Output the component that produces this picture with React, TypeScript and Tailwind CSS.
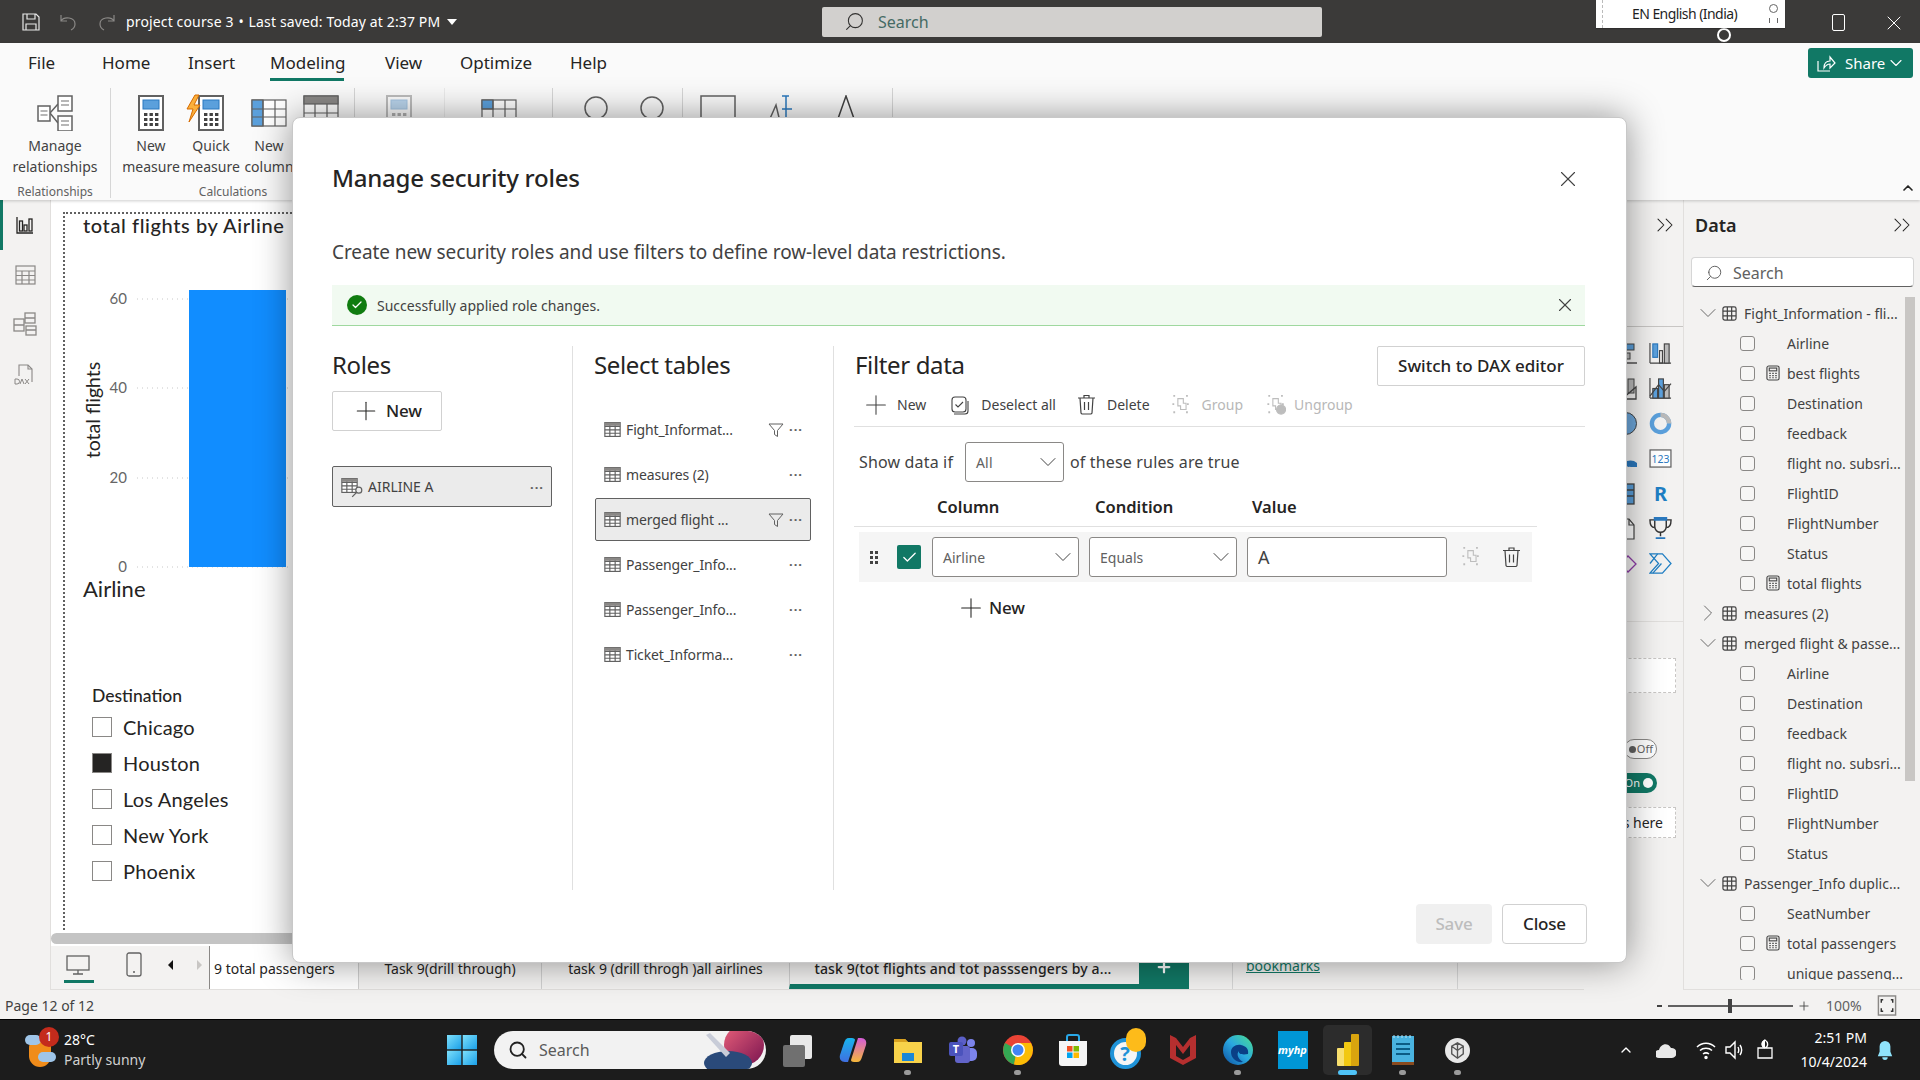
import React from "react";
import { ChevronDown, ChevronRight, ChevronUp, ChevronsRight, Plus, Search, X, Check } from "lucide-react";

const Tbl = ({ c = "#616161", className = "" }: { c?: string; className?: string }) => (
  <svg viewBox="0 0 16 16" className={className} fill="none" stroke={c} strokeWidth="1.1">
    <rect x="0.8" y="1.5" width="14.4" height="13" fill="#fff" />
    <path d="M0.8 5h14.4M0.8 8.3h14.4M0.8 11.5h14.4M5.5 1.5v13M10.5 1.5v13" />
    <rect x="0.8" y="1.5" width="14.4" height="3" fill="#8a8886" stroke="none" />
  </svg>
);
const TreeTbl = () => (
  <svg viewBox="0 0 16 16" className="w-[15px] h-[15px] shrink-0" fill="none" stroke="#444" strokeWidth="1.3">
    <rect x="1" y="1" width="14" height="14" rx="2" />
    <path d="M1 5.5h14M1 10.500h14M5.700 1v14M10.300 1v14" />
  </svg>
);
const Calc = () => (
  <svg viewBox="0 0 15 17" className="w-[14px] h-[16px] shrink-0" fill="none" stroke="#444" strokeWidth="1.2">
    <rect x="1" y="1" width="13" height="15" rx="2" />
    <rect x="3.5" y="3.2" width="8" height="3" />
    <path d="M3.5 9h1.600M6.700 9h1.600M9.900 9h1.600M3.500 11.300h1.600M6.700 11.300h1.600M9.900 11.300h1.600M3.500 13.600h1.600M6.700 13.600h1.600M9.900 13.600h1.600" strokeWidth="1.3" />
  </svg>
);
const Funnel = () => (
  <svg viewBox="0 0 16 16" className="w-[16px] h-[16px]" fill="none" stroke="#616161" strokeWidth="1">
    <path d="M1 2h14L9.500 8.500V14.500L6.500 12.500V8.500Z" />
  </svg>
);
const Trash = ({ c = "#424242", className = "w-[19px] h-[21px]" }: { c?: string; className?: string }) => (
  <svg viewBox="0 0 19 21" className={className} fill="none" stroke={c} strokeWidth="1.2">
    <path d="M1 4h17M7 4V1.500h5V4M3 4l1 15a1.500 1.500 0 0 0 1.500 1h8a1.500 1.500 0 0 0 1.500-1l1-15M7.500 8v8M11.500 8v8" />
  </svg>
);
const GroupIc = ({ x = false }: { x?: boolean }) => (
  <svg viewBox="0 0 20 22" className="w-[19px] h-[20px]" fill="none" stroke="#bdbdbd" strokeWidth="1.2">
    <path d="M1 1h2M1 9v2M1 19h2M15 1h2M17 9v2" strokeWidth="2" />
    <path d="M6 4h6v5h3v7H9v-4H6Z" />
    {x ? <circle cx="15" cy="16" r="5" fill="#bdbdbd" /> : <path d="M15 19h2" strokeWidth="2" />}
  </svg>
);
const Dots = () => <span className="text-[#616161] text-[13px] leading-none tracking-[1px] font-bold">···</span>;

const RibbonBtn = ({ w, l1, l2, children }: { w: string; l1: string; l2: string; children: React.ReactNode }) => (
  <div className={`${w} flex flex-col items-center shrink-0`}>
    <div className="h-[49px] flex items-start justify-center">{children}</div>
    <span className="text-[14px] leading-[20px] text-[#424242] whitespace-nowrap mt-[-1px]">{l1}</span>
    <span className="text-[14px] leading-[21px] text-[#424242] whitespace-nowrap">{l2}</span>
  </div>
);

const CalcBig = () => (
  <svg viewBox="0 0 26 36" className="w-[26px] h-[36px]">
    <rect x="1" y="1" width="24" height="34" fill="#fff" stroke="#616161" strokeWidth="2" />
    <rect x="5" y="5" width="16" height="9" fill="#5ba0dc" stroke="#2b79bf" />
    {[18, 23, 28].map((y) => [6, 11.5, 17].map((x) => <rect key={`${x}${y}`} x={x} y={y} width="3.4" height="3" fill="#424242" />))}
  </svg>
);

const fields1 = [
  ["Airline"], ["best flights", 1], ["Destination"], ["feedback"], ["flight no. subsri..."], ["FlightID"], ["FlightNumber"], ["Status"], ["total flights", 1],
] as [string, number?][];
const fields2 = [["Airline"], ["Destination"], ["feedback"], ["flight no. subsri..."], ["FlightID"], ["FlightNumber"], ["Status"]] as [string, number?][];
const fields3 = [["SeatNumber"], ["total passengers", 1], ["unique passeng..."]] as [string, number?][];

const GroupRow = ({ t, open = true }: { t: string; open?: boolean }) => (
  <div className="h-[30px] flex items-center pl-[10px] text-[14px] text-[#424242] whitespace-nowrap">
    {open ? <ChevronDown className="w-[28px] h-[28px] shrink-0 text-[#616161]" strokeWidth={0.8} /> : <ChevronRight className="w-[28px] h-[28px] shrink-0 text-[#616161]" strokeWidth={0.8} />}
    <TreeTbl />
    <span className="ml-[7px]">{t}</span>
  </div>
);
const FieldRow = ({ t, calc }: { t: string; calc?: number }) => (
  <div className="h-[30px] flex items-center pl-[56px] text-[14px] text-[#424242] whitespace-nowrap">
    <span className="w-[15px] h-[15px] shrink-0 border border-[#8a8886] rounded-[3px] bg-[#f7f6f5]" />
    <span className="w-[14px] ml-[11px] shrink-0">{calc ? <Calc /> : null}</span>
    <span className="ml-[7px]">{t}</span>
  </div>
);

const SelectBox = ({ t, w }: { t: string; w: string }) => (
  <div className={`${w} h-[40px] shrink-0 bg-white border border-[#8a8886] rounded-[3px] flex items-center justify-between pl-[10px] pr-[1px] text-[14px] text-[#616161]`}>
    <span>{t}</span>
    <ChevronDown className="w-[28px] h-[28px] text-[#424242]" strokeWidth={0.85} />
  </div>
);

const tables: [string, boolean, boolean][] = [
  ["Fight_Informat...", true, false],
  ["measures (2)", false, false],
  ["merged flight ...", true, true],
  ["Passenger_Info...", false, false],
  ["Passenger_Info...", false, false],
  ["Ticket_Informa...", false, false],
];

const AppIcon = ({ children, dot, active }: { children: React.ReactNode; dot?: boolean; active?: boolean }) => (
  <div className="w-[55px] h-[60px] shrink-0 flex items-center justify-center relative">
    {active && <span className="absolute left-[3px] top-[5px] w-[49px] h-[50px] bg-[#2c2c2c] rounded-[5px]" />}
    <span className="relative">{children}</span>
    {dot && <span className="absolute bottom-[5px] left-[24px] w-[7px] h-[5px] rounded-full bg-[#9a9a9a]" />}
    {active && <span className="absolute bottom-[5px] left-[18px] w-[19px] h-[5px] rounded-full bg-[#4fc3f7]" />}
  </div>
);

const VizCell = ({ children }: { children: React.ReactNode }) => <div className="h-[35px] flex items-center">{children}</div>;

export default function App() {
  return (
    <div className="relative w-[1920px] h-[1080px] overflow-hidden flex flex-col font-['Noto_Sans',sans-serif] text-[#252423] bg-white">
      {/* Title bar */}
      <div className="h-[43px] shrink-0 bg-[#3b3a39] flex items-center pl-[22px] text-white">
        <svg viewBox="0 0 18 18" className="w-[18px] h-[18px]" fill="none" stroke="#e8e8e8" strokeWidth="1.2">
          <path d="M1 1h13l3 3v13H1Z M5 1v5h8V1M4 17v-6h10v6" />
        </svg>
        <svg viewBox="0 0 18 18" className="w-[18px] h-[18px] ml-[20px]" fill="none" stroke="#8a8886" strokeWidth="1.2">
          <path d="M1 2v6h6M1 8c3-5 14-4 14 3 0 3-2 5-4 6" />
        </svg>
        <svg viewBox="0 0 18 18" className="w-[18px] h-[18px] ml-[19px]" fill="none" stroke="#8a8886" strokeWidth="1.2">
          <path d="M17 2v6h-6M17 8C14 3 3 4 3 11c0 3 2 5 4 6" />
        </svg>
        <span className="ml-[11px] w-[321px] text-[14px] whitespace-nowrap tracking-[0.01em]">project course 3 <span className="mx-[1px]">•</span> Last saved: Today at 2:37 PM</span>
        <span className="w-0 h-0 border-l-[5px] border-r-[5px] border-t-[6px] border-l-transparent border-r-transparent border-t-white" />
        <div className="ml-[365px] w-[500px] h-[30px] bg-[#d2d0ce] rounded-[2px] flex items-center pl-[22px]">
          <Search className="w-[21px] h-[21px] text-[#323130] -scale-x-100" strokeWidth={1.2} />
          <span className="ml-[13px] text-[16px] text-[#456a64]">Search</span>
        </div>
        <span className="ml-[395px] mt-[26px] w-[14px] h-[14px] rounded-full border-2 border-white" />
        <span className="ml-[101px] w-[13px] h-[17px] mt-[2px] border-[1.5px] border-white rounded-[2px]" />
        <X className="ml-[37px] w-[24px] h-[24px] mt-[2px]" strokeWidth={1} />
      </div>
      {/* Language overlay */}
      <div className="absolute left-[1596px] top-0 w-[189px] h-[28px] bg-white z-30 flex items-center text-[14px] text-[#1f1f1f] shadow-[0_1px_1px_rgba(0,0,0,0.2)] border-l-[3px] border-white">
        <span className="h-full border-l border-dashed border-[#bbb] ml-[3px]" />
        <span className="ml-[29px] mt-[-2px] tracking-[-0.04em] whitespace-nowrap">EN English (India)</span>
        <span className="ml-[32px] flex flex-col items-center mt-[-2px]">
          <span className="w-[9px] h-[9px] rounded-full border-[1.5px] border-[#666]" />
          <span className="w-[9px] h-[5px] mt-[5px] border-x-[1.5px] border-b-0 border-[#666]" />
        </span>
      </div>

      {/* Ribbon */}
      <div className="h-[157px] shrink-0 bg-[#fafafa] relative z-10 shadow-[0_1px_3px_rgba(0,0,0,0.2)] flex flex-col">
        <div className="h-[45px] flex items-start text-[17px] text-[#252423] pt-[7px] pl-[28px]">
          <span className="w-[74px]">File</span>
          <span className="w-[86px]">Home</span>
          <span className="w-[82px]">Insert</span>
          <span className="w-[115px] flex flex-col">
            <span>Modeling</span>
            <span className="w-[74px] h-[3px] mt-[2px] bg-[#117865]" />
          </span>
          <span className="w-[75px]">View</span>
          <span className="w-[110px]">Optimize</span>
          <span className="w-[50px]">Help</span>
          <span className="ml-auto mr-[7px] mt-[-2px] w-[105px] h-[30px] rounded-[3px] bg-[#117865] text-white text-[15px] flex items-center pl-[8px]">
            <svg viewBox="0 0 20 20" className="w-[20px] h-[20px]" fill="none" stroke="#fff" strokeWidth="1.2">
              <path d="M2 8v10h12M8 15c0-5 3-7 6-7V4l5 6-5 5v-4c-2 0-4 1-6 4Z" />
            </svg>
            <span className="ml-[9px]">Share</span>
            <ChevronDown className="w-[20px] h-[20px] ml-[1px]" strokeWidth={1.3} />
          </span>
        </div>
        <div className="flex h-[110px]">
          <div className="w-[111px] shrink-0 flex flex-col items-center border-r border-[#d6d6d6] h-[110px]">
            <RibbonBtn w="w-[110px]" l1="Manage" l2="relationships">
              <svg viewBox="0 0 36 36" className="w-[36px] h-[36px] mt-[7px]" fill="#fff" stroke="#616161" strokeWidth="1.5">
                <path d="M13 18L21 9M13 18L21 28" fill="none" />
                <rect x="1" y="11" width="12" height="15" />
                <rect x="21" y="1" width="14" height="15" />
                <rect x="21" y="21" width="14" height="15" />
                <path d="M3.500 16h7M3.500 20h7M24 6h8M24 10h8M24 26h8M24 30h8" fill="none" stroke="#a0a0a0" />
              </svg>
            </RibbonBtn>
            <span className="text-[12px] leading-[17px] text-[#616161] mt-[6px]">Relationships</span>
          </div>
          <div className="w-[244px] shrink-0 border-r border-[#d6d6d6] h-[110px] flex flex-col pl-[10px]">
            <div className="flex">
              <RibbonBtn w="w-[60px]" l1="New" l2="measure"><span className="mt-[7px]"><CalcBig /></span></RibbonBtn>
              <RibbonBtn w="w-[60px]" l1="Quick" l2="measure">
                <span className="mt-[7px] relative flex">
                  <CalcBig />
                  <svg viewBox="0 0 16 28" className="absolute left-[-12px] top-[-2px] w-[16px] h-[30px]" fill="#fbb03b" stroke="#d66b00">
                    <path d="M9 1L1 15h6l-4 13 11-17H8l5-10Z" />
                  </svg>
                </span>
              </RibbonBtn>
              <RibbonBtn w="w-[56px]" l1="New" l2="column">
                <svg viewBox="0 0 36 28" className="w-[36px] h-[28px] mt-[11px]" fill="#fff" stroke="#616161" strokeWidth="1.2">
                  <rect x="1" y="1" width="34" height="26" />
                  <rect x="1" y="1" width="11" height="26" fill="#5ba0dc" />
                  <path d="M1 10h34M1 18h34M12 1v26M24 1v26" fill="none" />
                </svg>
              </RibbonBtn>
              <span className="ml-[6px] mt-[7px]">
                <svg viewBox="0 0 36 36" className="w-[36px] h-[36px]" fill="#fff" stroke="#616161" strokeWidth="1.2">
                  <rect x="1" y="1" width="34" height="34" />
                  <rect x="1" y="1" width="34" height="8" fill="#8a8886" />
                  <path d="M1 18h34M1 27h34M12 9v26M24 9v26" fill="none" />
                </svg>
              </span>
            </div>
            <span className="text-[12px] leading-[17px] text-[#616161] text-center mt-[6px] w-[224px]">Calculations</span>
          </div>
          <div className="w-[90px] shrink-0 border-r border-[#d6d6d6] h-[110px] pl-[31px] pt-[7px] opacity-40">
            <CalcBig />
          </div>
          <div className="w-[108px] shrink-0 border-r border-[#d6d6d6] h-[110px] pl-[36px] pt-[11px]">
            <svg viewBox="0 0 36 30" className="w-[36px] h-[30px]" fill="#fff" stroke="#616161" strokeWidth="1.2">
              <rect x="1" y="1" width="34" height="28" /><rect x="1" y="1" width="11" height="9" fill="#5ba0dc" /><path d="M1 10h34M12 1v28M24 1v28" fill="none" />
            </svg>
          </div>
          <div className="w-[130px] shrink-0 border-r border-[#d6d6d6] h-[110px] pl-[30px] pt-[7px] flex gap-[30px]">
            {[0, 1].map((i) => (
              <svg key={i} viewBox="0 0 26 36" className="w-[26px] h-[36px]" fill="none" stroke="#616161" strokeWidth="1.5"><circle cx="13" cy="13" r="11" /><path d="M13 24l6 6" stroke="#2b79bf" /></svg>
            ))}
          </div>
          <div className="w-[210px] shrink-0 border-r border-[#d6d6d6] h-[110px] pl-[17px] pt-[7px] flex gap-[28px]">
            <svg viewBox="0 0 36 36" className="w-[36px] h-[36px]" fill="none" stroke="#616161" strokeWidth="1.5"><rect x="1" y="1" width="34" height="34" /></svg>
            <svg viewBox="0 0 30 36" className="w-[30px] h-[36px]" fill="none" stroke="#616161" strokeWidth="1.5"><path d="M1 35L12 10l6 25" /><path d="M18 1h7M22 1v34M18 14h10" stroke="#2b79bf" /></svg>
            <svg viewBox="0 0 26 36" className="w-[26px] h-[36px] ml-[11px]" fill="none" stroke="#424242" strokeWidth="1.5"><path d="M1 35L13 1l12 34" /></svg>
          </div>
        </div>
        <ChevronUp className="absolute right-[4px] bottom-[4px] w-[16px] h-[16px] text-[#252423]" strokeWidth={2.5} />
      </div>

      {/* Body */}
      <div className="flex-1 flex min-h-0">
        {/* Left rail */}
        <div className="w-[51px] shrink-0 bg-[#f3f2f1] border-r border-[#e1dfdd] flex flex-col">
          <div className="h-[50px] border-l-[3px] border-[#117865] flex items-center justify-center pr-[3px]">
            <svg viewBox="0 0 18 18" className="w-[18px] h-[18px]" fill="none" stroke="#252423" strokeWidth="1.3">
              <path d="M1 1v16h16" /><rect x="3.500" y="5" width="3" height="10" /><rect x="8" y="9" width="3" height="6" /><rect x="13" y="3" width="3" height="12" />
            </svg>
          </div>
          <div className="h-[49px] flex items-center justify-center">
            <svg viewBox="0 0 21 20" className="w-[21px] h-[20px]" fill="none" stroke="#8a8886" strokeWidth="1.2"><rect x="1" y="1" width="19" height="18" /><path d="M1 6h19M1 10.500h19M1 15h19M7 6v13M14 6v13" /></svg>
          </div>
          <div className="h-[50px] flex items-center justify-center">
            <svg viewBox="0 0 24 24" className="w-[24px] h-[24px]" fill="none" stroke="#8a8886" strokeWidth="1.3"><rect x="1" y="7" width="10" height="12" /><rect x="12" y="1" width="10" height="10" /><rect x="13" y="14" width="10" height="9" /><path d="M1 13h10M12 6h10M13 18h10" /></svg>
          </div>
          <div className="h-[52px] flex items-center justify-center">
            <svg viewBox="0 0 24 22" className="w-[24px] h-[22px]" fill="none" stroke="#8a8886" strokeWidth="1.1">
              <path d="M6 12V1h9l4 4v13" /><path d="M15 1v4h4" />
              <path d="M2 15h2a2 2 0 0 1 0 5H2ZM7 20l2-5 2 5M12 15l4 5M16 15l-4 5" strokeWidth="1" />
            </svg>
          </div>
        </div>

        {/* Canvas column */}
        <div className="w-[1533px] shrink-0 flex flex-col">
          <div className="h-[733px] shrink-0 bg-white pl-[12px] pt-[12px]">
            <div className="h-[718px] border-l-2 border-t-2 border-dotted border-[#616161] pl-[18px]">
              <div className="text-[20px] leading-[22px] text-[#252423] whitespace-nowrap tracking-[0.03em] font-['Lato',sans-serif] font-medium">total flights by Airline</div>
              <svg width="227" height="338" className="ml-[-18px] mt-[2px] block">
                <g fill="#666" fontSize="15" textAnchor="end" fontFamily="Lato, sans-serif">
                  <text x="62" y="66">60</text>
                  <text x="62" y="155">40</text>
                  <text x="62" y="245">20</text>
                  <text x="62" y="334">0</text>
                </g>
                <g stroke="#c8c8c8" strokeDasharray="1 4">
                  <path d="M72 61H227M72 150H227M72 240H227M72 329H227" />
                </g>
                <rect x="124" y="52" width="97" height="277" fill="#118dff" />
                <text transform="rotate(-90)" x="-172" y="35" textAnchor="middle" fontSize="19.5" fill="#252423" fontFamily="Lato, sans-serif">total flights</text>
              </svg>
              <div className="text-[22px] leading-[26px] font-['Lato',sans-serif] text-[#252423]">Airline</div>
              <div className="mt-[82px] ml-[9px] text-[17.5px] leading-[23px] font-medium font-['Lato',sans-serif]">Destination</div>
              <div className="ml-[9px] mt-[2px] flex flex-col font-['Lato',sans-serif] text-[20px] tracking-[0.01em]">
                {["Chicago", "Houston", "Los Angeles", "New York", "Phoenix"].map((c) => (
                  <div key={c} className="h-[36px] flex items-center whitespace-nowrap">
                    <span className={`w-[20px] h-[20px] border border-[#8a8886] ${c === "Houston" ? "bg-[#252423]" : "bg-white"}`} />
                    <span className="ml-[11px]">{c}</span>
                  </div>
                ))}
              </div>
            </div>
          </div>
          <div className="h-[11px] bg-[#c4c4c4] rounded-l-full" />
          <div className="h-[2px] bg-white" />
          <div className="flex-1 flex bg-[#f3f2f1] border-b border-[#e1dfdd] text-[14px]">
            <div className="w-[159px] shrink-0 flex relative border-r border-[#8a8886]">
              <svg viewBox="0 0 24 20" className="absolute left-[15px] top-[9px] w-[24px] h-[20px]" fill="none" stroke="#616161" strokeWidth="1.3"><rect x="1" y="1" width="22" height="14" /><path d="M12 15v4M7 19h10" /></svg>
              <span className="absolute left-[13px] bottom-[6px] w-[30px] h-[3px] bg-[#117865]" />
              <svg viewBox="0 0 16 25" className="absolute left-[75px] top-[6px] w-[16px] h-[25px]" fill="none" stroke="#616161" strokeWidth="1.3"><rect x="1" y="1" width="14" height="23" rx="2" /><path d="M7 20h2" /></svg>
              <span className="absolute left-[117px] top-[14px] w-0 h-0 border-y-[5px] border-r-[5px] border-y-transparent border-r-[#111]" />
              <span className="absolute left-[146px] top-[14px] w-0 h-0 border-y-[5px] border-l-[5px] border-y-transparent border-l-[#c8c6c4]" />
            </div>
            <div className="w-[149px] shrink-0 bg-white pl-[4px] pt-[12px] whitespace-nowrap border-r border-[#d0d0d0]">9 total passengers</div>
            <div className="w-[183px] shrink-0 pt-[12px] text-center whitespace-nowrap border-r border-[#d0d0d0]">Task 9(drill through)</div>
            <div className="w-[247px] shrink-0 pt-[12px] text-center whitespace-nowrap">task 9 (drill throgh )all airlines</div>
            <div className="w-[350px] shrink-0 border-l border-[#d0d0d0] border-b-[5px] border-b-[#117865] pt-[12px] pr-[3px] text-center whitespace-nowrap font-medium tracking-[0.01em]">task 9(tot flights and tot passsengers by a...</div>
            <div className="w-[50px] shrink-0 bg-[#117865] text-white flex justify-center pt-[12px]"><Plus className="w-[18px] h-[18px]" strokeWidth={3} /></div>
            <div className="w-[43px] shrink-0" />
            <div className="w-[226px] shrink-0 border-x border-[#d6d6d6] pl-[13px] pt-[9px]"><span className="underline text-[#117865]">bookmarks</span></div>
          </div>
        </div>

        {/* Visual pane strip */}
        <div className="w-[100px] shrink-0 bg-[#f3f2f1] border-r border-[#e1dfdd] flex flex-col overflow-hidden">
          <div className="h-[50px] flex items-center justify-end pr-[4px]"><ChevronsRight className="w-[28px] h-[28px]" strokeWidth={0.9} /></div>
          <div className="h-[77px] border-b border-[#c8c6c4]" />
          <div className="pl-[30px] pt-[9px] grid grid-cols-[23px_23px] gap-x-[12px]">
            <VizCell><svg viewBox="0 0 23 23" className="w-[23px] h-[23px]" fill="#5ba0dc" stroke="#444"><rect x="2" y="2" width="18" height="6" /><rect x="2" y="11" width="14" height="6" fill="#bbb" /><path d="M1 21h22" fill="none" strokeWidth="1.4" /></svg></VizCell>
            <VizCell><svg viewBox="0 0 24 24" className="w-[23px] h-[23px]" fill="none" stroke="#444" strokeWidth="1.2"><path d="M1 22h22M1 1v21" /><rect x="4" y="2" width="5" height="14" fill="#5ba0dc" stroke="#2b79bf" /><rect x="11" y="9" width="3" height="13" /><rect x="16" y="2" width="5" height="20" fill="#bbb" /></svg></VizCell>
            <VizCell><svg viewBox="0 0 23 23" className="w-[23px] h-[23px]" fill="#bbb" stroke="#444"><rect x="14" y="2" width="6" height="14" /><path d="M8 22l14-12V22Z" fill="none" strokeWidth="1.3" /></svg></VizCell>
            <VizCell><svg viewBox="0 0 24 24" className="w-[23px] h-[23px]" fill="none" stroke="#444" strokeWidth="1.2"><path d="M1 22h22M1 1v21" /><rect x="4" y="12" width="5" height="10" fill="#5ba0dc" /><rect x="10" y="2" width="5" height="20" fill="#5ba0dc" /><rect x="16" y="8" width="5" height="14" fill="#bbb" /><path d="M1 20L10 8l6 7 7-8" /></svg></VizCell>
            <VizCell><svg viewBox="0 0 23 23" className="w-[23px] h-[23px]"><circle cx="11.500" cy="11.500" r="11" fill="#6ea8dc" stroke="#444" /></svg></VizCell>
            <VizCell><svg viewBox="0 0 24 24" className="w-[23px] h-[23px]" fill="none" strokeWidth="4.500"><circle cx="12" cy="12" r="9" stroke="#5ba0dc" /><path d="M12 3a9 9 0 0 1 9 9" stroke="#b9b9b9" /></svg></VizCell>
            <VizCell><svg viewBox="0 0 23 23" className="w-[23px] h-[23px]" fill="#2b79bf"><path d="M10 16a10 10 0 0 1 13 0v4h-6a4 4 0 0 0-3 0Z" /></svg></VizCell>
            <VizCell><svg viewBox="0 0 24 20" className="w-[23px] h-[19px]" fill="#fff" stroke="#616161" strokeWidth="1.3"><rect x="1" y="1" width="22" height="18" /><text x="12" y="15" fontSize="11" fontFamily="Noto Sans" textAnchor="middle" fill="#2b79bf" stroke="none">123</text></svg></VizCell>
            <VizCell><svg viewBox="0 0 23 23" className="w-[23px] h-[23px]" fill="#5ba0dc" stroke="#444" strokeWidth="1.3"><rect x="6" y="2" width="14" height="20" /><path d="M6 8h14M6 14h14" /></svg></VizCell>
            <VizCell><span className="text-[#1f7fc4] text-[20px] font-bold leading-[22px] pl-[5px]">R</span></VizCell>
            <VizCell><svg viewBox="0 0 23 23" className="w-[23px] h-[23px]" fill="#fff" stroke="#444" strokeWidth="1.2"><path d="M6 22V2h9l5 6v14Z" /><path d="M15 2v6h5" fill="none" /></svg></VizCell>
            <VizCell><svg viewBox="0 0 24 24" className="w-[23px] h-[23px]" fill="none" stroke="#333" strokeWidth="1.5"><path d="M6 1h12v9a6 6 0 0 1-12 0Z" /><path d="M6 3H1c0 5 2 8 5 8M18 3h5c0 5-2 8-5 8M12 16v4" /><path d="M6 1h12v2H6ZM7 22h10" stroke="#2b79bf" strokeWidth="2" /></svg></VizCell>
            <VizCell><svg viewBox="0 0 23 23" className="w-[23px] h-[23px]" fill="none" stroke="#8e3ba8" strokeWidth="1.3"><path d="M14 4l8 8-8 8-8-8Z" /></svg></VizCell>
            <VizCell><svg viewBox="0 0 24 22" className="w-[23px] h-[21px]" fill="none" stroke="#1f7fc4" strokeWidth="1.3"><path d="M1 1h13l9 10-9 10H1l9-10Z" /><path d="M1 11l8-10M4 21l9-10" /></svg></VizCell>
          </div>
          <div className="mt-[40px] h-[1px] bg-[#e1dfdd] shrink-0" />
          <div className="mt-[36px] mr-[7px] h-[35px] bg-white border border-dashed border-[#c8c6c4] ml-[10px] shrink-0" />
          <div className="mt-[46px] ml-[40px] w-[33px] h-[20px] rounded-full border border-[#8a8886] bg-white text-[11px] text-[#616161] flex items-center justify-end pr-[3px] gap-[1px] shrink-0">
            <span className="w-[7px] h-[7px] rounded-full bg-[#616161]" />Off
          </div>
          <div className="mt-[14px] ml-[30px] w-[43px] h-[20px] rounded-full bg-[#117865] text-white text-[11px] flex items-center justify-end pr-[4px] gap-[3px] shrink-0">
            <span>On</span><span className="w-[10px] h-[10px] rounded-full bg-white" />
          </div>
          <div className="mt-[14px] mr-[7px] h-[31px] bg-white border border-dashed border-[#c8c6c4] ml-[10px] text-[14px] flex items-center justify-end pr-[12px] whitespace-nowrap shrink-0">fields here</div>
        </div>

        {/* Data pane */}
        <div className="w-[236px] shrink-0 bg-[#f3f2f1] flex flex-col border-b border-[#e1dfdd] relative">
          <div className="h-[50px] flex items-center justify-between pl-[11px] pr-[4px]">
            <span className="text-[18px] font-semibold">Data</span>
            <ChevronsRight className="w-[28px] h-[28px]" strokeWidth={0.9} />
          </div>
          <div className="ml-[7px] mt-[7px] w-[223px] h-[30px] bg-white rounded-[4px] border border-[#d6d6d6] border-b-[#616161] flex items-center pl-[13px] pt-[1px] shrink-0">
            <Search className="w-[18px] h-[18px] text-[#616161] -scale-x-100" strokeWidth={1.3} />
            <span className="ml-[10px] text-[16px] text-[#616161]">Search</span>
          </div>
          <div className="mt-[11px] h-[682px] overflow-hidden">
            <GroupRow t="Fight_Information - fli..." />
            {fields1.map(([t, c]) => <FieldRow key={t} t={t} calc={c} />)}
            <GroupRow t="measures (2)" open={false} />
            <GroupRow t="merged flight & passe..." />
            {fields2.map(([t, c]) => <FieldRow key={t} t={t} calc={c} />)}
            <GroupRow t="Passenger_Info duplic..." />
            {fields3.map(([t, c]) => <FieldRow key={t} t={t} calc={c} />)}
          </div>
          <span className="absolute right-[5px] top-[97px] w-[10px] h-[484px] bg-[#c8c6c4]" />
        </div>
      </div>

      {/* Status bar */}
      <div className="h-[29px] shrink-0 bg-[#f3f2f1] flex items-center pl-[5px] pt-[2px] text-[14px] text-[#424242]">
        <span>Page 12 of 12</span>
        <span className="ml-[1563px] w-[5px] h-[2px] bg-[#424242]" />
        <span className="ml-[6px] w-[125px] h-[2px] bg-[#616161] relative">
          <span className="absolute left-[60px] top-[-6px] w-[4px] h-[14px] bg-[#424242]" />
        </span>
        <Plus className="ml-[4px] w-[14px] h-[14px]" strokeWidth={1.5} />
        <span className="ml-[15px] text-[#616161]">100%</span>
        <svg viewBox="0 0 20 22" className="ml-[15px] w-[20px] h-[21px]" fill="none" stroke="#616161" strokeWidth="1.5"><rect x="1" y="1" width="18" height="20" stroke="#8a8886" /><path d="M6 5H4v3M14 5h2v3M6 17H4v-3M14 17h2v-3" stroke="#333" /></svg>
      </div>

      {/* Taskbar */}
      <div className="h-[61px] shrink-0 bg-[#1c1c1c] border-t border-black flex items-center text-white relative">
        <div className="w-[64px] h-full relative shrink-0">
          <span className="absolute left-[29px] top-[17px] w-[22px] h-[30px] rounded-full bg-[#f08c1a]" />
          <span className="absolute left-[25px] top-[15px] w-[16px] h-[10px] rounded-full bg-[#9fc5e8]" />
          <span className="absolute left-[38px] top-[32px] w-[18px] h-[10px] rounded-full bg-[#9fc5e8]" />
          <span className="absolute left-[39px] top-[7px] w-[20px] h-[20px] rounded-full bg-[#c42b1c] text-[12px] leading-[20px] text-center">1</span>
        </div>
        <div className="w-[383px] shrink-0 flex flex-col text-[14px] leading-[20px]">
          <span>28°C</span>
          <span className="text-[#d0d0d0]">Partly sunny</span>
        </div>
        <svg viewBox="0 0 30 30" className="w-[30px] h-[30px] shrink-0">
          <defs><linearGradient id="w" x1="0" y1="0" x2="1" y2="1"><stop offset="0" stopColor="#7ee0fb" /><stop offset="1" stopColor="#1a9fe8" /></linearGradient></defs>
          <rect x="0" y="0" width="14.300" height="14.300" fill="url(#w)" /><rect x="15.700" y="0" width="14.300" height="14.300" fill="url(#w)" /><rect x="0" y="15.700" width="14.300" height="14.300" fill="url(#w)" /><rect x="15.700" y="15.700" width="14.300" height="14.300" fill="url(#w)" />
        </svg>
        <div className="ml-[17px] w-[272px] h-[38px] rounded-full bg-[#f2f2f2] flex items-center pl-[14px] shrink-0 overflow-hidden relative">
          <Search className="w-[20px] h-[20px] text-[#222]" strokeWidth={2.2} />
          <span className="ml-[11px] text-[16px] text-[#5a5a5a]">Search</span>
          <svg viewBox="0 0 64 38" className="absolute right-0 top-0 w-[64px] h-[38px]">
            <defs><linearGradient id="m" x1="0" y1="0" x2="1" y2="1"><stop offset="0" stopColor="#e8607a" /><stop offset="1" stopColor="#7a1450" /></linearGradient></defs>
            <circle cx="42" cy="14" r="20" fill="url(#m)" />
            <ellipse cx="26" cy="32" rx="24" ry="12" fill="#2a4a7a" />
            <path d="M4 4L24 26l4-4L8 2Z" fill="#c8ccd8" />
          </svg>
        </div>
        <div className="ml-[4px] flex items-center shrink-0">
          <AppIcon>
            <span className="block relative w-[30px] h-[30px]">
              <span className="absolute left-[7px] top-0 w-[22px] h-[24px] rounded-[2px] bg-[#e8e8e8]" />
              <span className="absolute left-0 top-[10px] w-[22px] h-[22px] rounded-[2px] bg-[#707070]" />
            </span>
          </AppIcon>
          <AppIcon>
            <svg viewBox="0 0 30 30" className="w-[30px] h-[30px]" fill="none">
              <defs>
                <linearGradient id="cp" x1="0" y1="0" x2="0" y2="1"><stop offset="0" stopColor="#18b4ee" /><stop offset="1" stopColor="#3f6fe0" /></linearGradient>
                <linearGradient id="cq" x1="0" y1="0" x2="0" y2="1"><stop offset="0" stopColor="#d45bd8" /><stop offset="1" stopColor="#f5b73a" /></linearGradient>
              </defs>
              <path d="M11 3c-3 0-4 2-5 5L2 20c-1 4 1 7 5 7h3L17 5c0-1-1-2-3-2Z" fill="url(#cp)" />
              <path d="M19 27c3 0 4-2 5-5l4-12c1-4-1-7-5-7h-3L13 25c0 1 1 2 3 2Z" fill="url(#cq)" />
            </svg>
          </AppIcon>
          <AppIcon dot>
            <svg viewBox="0 0 30 28" className="w-[30px] h-[28px]"><path d="M1 3h11l3 3h14v21H1Z" fill="#f8d24a" /><path d="M1 3h11l3 3H1Z" fill="#d9a11f" /><rect x="9" y="17" width="12" height="8" fill="#1a87d8" /></svg>
          </AppIcon>
          <AppIcon>
            <svg viewBox="0 0 30 28" className="w-[30px] h-[28px]"><circle cx="23" cy="7" r="4" fill="#7b83eb" /><circle cx="14" cy="5" r="4.500" fill="#5b5fc7" /><rect x="17" y="12" width="12" height="13" rx="5" fill="#7b83eb" /><rect x="7" y="10" width="15" height="17" rx="3" fill="#6264c9" /><rect x="1" y="6" width="14" height="14" rx="2" fill="#4b53bc" /><text x="8" y="17" fontSize="11" fill="#fff" textAnchor="middle" fontFamily="Noto Sans" fontWeight="700">T</text></svg>
          </AppIcon>
          <AppIcon dot>
            <svg viewBox="0 0 30 30" className="w-[30px] h-[30px]"><circle cx="15" cy="15" r="15" fill="#ea4335" /><path d="M15 15L2 8A15 15 0 0 0 11 29.500Z" fill="#34a853" /><path d="M15 8h13a15 15 0 0 1-17 21.500Z" fill="#fbbc05" /><circle cx="15" cy="15" r="7" fill="#fff" /><circle cx="15" cy="15" r="5.500" fill="#4285f4" /></svg>
          </AppIcon>
          <AppIcon>
            <svg viewBox="0 0 30 32" className="w-[30px] h-[32px]"><path d="M9 7V3a2 2 0 0 1 2-2h8a2 2 0 0 1 2 2v4" fill="none" stroke="#29a8e8" strokeWidth="2" /><path d="M1 7h28v22a3 3 0 0 1-3 3H4a3 3 0 0 1-3-3Z" fill="#f5f5f5" /><rect x="9" y="12" width="5.500" height="5.500" fill="#f25022" /><rect x="15.500" y="12" width="5.500" height="5.500" fill="#7fba00" /><rect x="9" y="18.500" width="5.500" height="5.500" fill="#00a4ef" /><rect x="15.500" y="18.500" width="5.500" height="5.500" fill="#ffb900" /></svg>
          </AppIcon>
          <AppIcon>
            <span className="block relative w-[36px] h-[44px]">
              <span className="absolute left-0 top-[10px] w-[31px] h-[31px] rounded-full bg-[#f5f5f5] border-[4px] border-[#1f93d8] text-[#1f93d8] text-[20px] font-bold leading-[23px] text-center">?</span>
              <span className="absolute left-[16px] top-0 w-[20px] h-[24px] rounded-full bg-[#fdbb1a]" />
            </span>
          </AppIcon>
          <AppIcon>
            <svg viewBox="0 0 28 32" className="w-[28px] h-[32px]"><path d="M1 1l6 3 7 9 7-9 6-3v23l-13 7-13-7Z" fill="#b52f2f" /><path d="M7 11l7 9 7-9v11l-7 4-7-4Z" fill="#1c1c1c" /></svg>
          </AppIcon>
          <AppIcon dot>
            <svg viewBox="0 0 30 30" className="w-[30px] h-[30px]"><defs><linearGradient id="e" x1="1" y1="0" x2="0" y2="1"><stop offset="0" stopColor="#4be08f" /><stop offset=".5" stopColor="#2aa8e0" /><stop offset="1" stopColor="#0c4fa0" /></linearGradient></defs><circle cx="15" cy="15" r="15" fill="url(#e)" /><path d="M8 17c0-5 5-8 10-7 5 1 8 4 7 9-6 1-10 0-9-3-3 3-1 8 4 11-7 1-12-4-12-10Z" fill="#0a3f86" /></svg>
          </AppIcon>
          <AppIcon>
            <span className="block w-[30px] h-[38px] bg-[#0096d6] text-white text-[11px] italic font-bold leading-[38px] text-center">myhp</span>
          </AppIcon>
          <AppIcon active>
            <svg viewBox="0 0 24 32" className="w-[24px] h-[32px]"><rect x="1" y="14" width="8" height="18" rx="1" fill="#f8df6e" /><rect x="8" y="8" width="8" height="24" rx="1" fill="#f2c811" /><rect x="15" y="0" width="8" height="32" rx="1" fill="#d9a40e" /></svg>
          </AppIcon>
          <AppIcon dot>
            <svg viewBox="0 0 24 32" className="w-[24px] h-[32px]"><rect x="1" y="2" width="22" height="28" fill="#49b3e0" /><rect x="1" y="28" width="22" height="3" fill="#8a4b1f" /><path d="M5 10h14M5 15h14M5 20h14" stroke="#0b5c85" strokeWidth="2.200" /><path d="M3 1v3M7 1v3M11 1v3M15 1v3M19 1v3" stroke="#b8e3f5" /></svg>
          </AppIcon>
          <AppIcon dot>
            <svg viewBox="0 0 26 26" className="w-[25px] h-[25px]" fill="none"><circle cx="13" cy="13" r="13" fill="#e8e8e8" /><path d="M13 5l6 3.500v8L13 21l-6-4.500v-8Z M13 5v8M7 8.500l6 4.500 6-4.500M13 13v8" stroke="#555" strokeWidth="1.400" /></svg>
          </AppIcon>
        </div>
        <div className="ml-[133px] flex items-center shrink-0">
          <ChevronUp className="w-[16px] h-[16px]" strokeWidth={2} />
          <svg viewBox="0 0 20 18" className="ml-[22px] w-[20px] h-[18px]"><path d="M3 17a4 4 0 0 1 0-8c1-5 8-9 12-2a5 5 0 0 1 1 10Z" fill="#e8e8e8" /></svg>
          <svg viewBox="0 0 20 20" className="ml-[20px] w-[20px] h-[20px]" fill="none" stroke="#fff" strokeWidth="1.5"><path d="M1 7c5-5 13-5 18 0M4 10.500c3-3 9-3 12 0M7 14c2-1.500 4-1.500 6 0" /><circle cx="10" cy="17.500" r="1" fill="#fff" /></svg>
          <svg viewBox="0 0 20 20" className="ml-[8px] w-[20px] h-[20px]" fill="none" stroke="#fff" strokeWidth="1.4"><path d="M2 7h4l5-5v16l-5-5H2ZM14 7c1 2 1 4 0 6M16 5c2 3 2 7 0 10" /></svg>
          <svg viewBox="0 0 20 22" className="ml-[11px] w-[20px] h-[22px]" fill="none" stroke="#fff" strokeWidth="1.3"><path d="M3 9h14v10H3ZM10 9c-4-2-3-6 0-8 3 2 4 6 0 8Z" /><path d="M10 1c-4 2-4 6 0 8" fill="#fff" /></svg>
        </div>
        <div className="ml-[22px] w-[70px] flex flex-col items-end text-[14px] leading-[24px] shrink-0 whitespace-nowrap">
          <span>2:51 PM</span>
          <span>10/4/2024</span>
        </div>
        <svg viewBox="0 0 20 22" className="ml-[9px] w-[18px] h-[22px] shrink-0" fill="#8fe3fb"><path d="M10 1a6 6 0 0 0-6 6v6l-2 5h16l-2-5V7a6 6 0 0 0-6-6ZM7 19a3 3 0 0 0 6 0Z" /></svg>
      </div>

      {/* Modal */}
      <div className="absolute z-20 left-[292px] top-[117px] w-[1335px] h-[846px] bg-white rounded-[8px] border border-[#c8c8c8] shadow-[0_0_36px_rgba(0,0,0,0.42)] flex flex-col pl-[39px] pr-[41px] text-[#252423]">
        <div className="mt-[42px] h-[36px] flex items-center justify-between shrink-0">
          <span className="text-[24px] font-medium tracking-[-0.01em]">Manage security roles</span>
          <X className="w-[26px] h-[26px] mr-[4px] mt-[2px] text-[#424242]" strokeWidth={1} />
        </div>
        <div className="mt-[44px] h-[24px] flex items-center text-[19px] tracking-[-0.004em] text-[#424242] shrink-0">Create new security roles and use filters to define row-level data restrictions.</div>
        <div className="mt-[21px] h-[41px] bg-[#f1faf1] border-b border-[#9fd89f] flex items-center pl-[15px] pr-[9px] shrink-0 text-[14px] text-[#424242]">
          <span className="w-[20px] h-[20px] rounded-full bg-[#107c10] flex items-center justify-center"><Check className="w-[12px] h-[12px] text-white" strokeWidth={2.5} /></span>
          <span className="ml-[10px]">Successfully applied role changes.</span>
          <X className="ml-auto w-[22px] h-[22px] text-[#424242]" strokeWidth={1.2} />
        </div>
        <div className="mt-[20px] h-[544px] flex shrink-0">
          {/* Roles */}
          <div className="w-[241px] shrink-0 border-r border-[#e0e0e0]">
            <div className="h-[38px] flex items-center text-[24px] tracking-[-0.015em]">Roles</div>
            <div className="mt-[7px] w-[110px] h-[40px] border border-[#d1d1d1] rounded-[2px] flex items-center pl-[18px] text-[17px] font-medium tracking-[-0.01em]">
              <Plus className="w-[30px] h-[30px]" strokeWidth={0.85} />
              <span className="ml-[5px]">New</span>
            </div>
            <div className="mt-[35px] w-[220px] h-[41px] bg-[#ebebeb] border border-[#616161] rounded-[2px] flex items-center pl-[8px] pr-[7px] text-[14px] text-[#424242]">
              <span className="relative w-[20px] h-[20px]">
                <Tbl className="w-[17px] h-[17px]" />
                <svg viewBox="0 0 10 10" className="absolute right-[-2px] bottom-[-1px] w-[12px] h-[12px]" fill="#ebebeb" stroke="#616161"><circle cx="6.500" cy="3.500" r="2.500" /><path d="M5 5L1 9" /></svg>
              </span>
              <span className="ml-[7px] mt-[-1px]">AIRLINE A</span>
              <span className="ml-auto"><Dots /></span>
            </div>
          </div>
          {/* Tables */}
          <div className="w-[261px] shrink-0 border-r border-[#e0e0e0] pl-[21px]">
            <div className="h-[38px] flex items-center text-[24px] tracking-[-0.015em]">Select tables</div>
            <div className="mt-[23px] flex flex-col">
              {tables.map(([t, f, sel], i) => (
                <div key={i} className="h-[45px] flex items-center">
                  <div className={`w-[216px] ml-[1px] h-[43px] flex items-center pl-[8px] pr-[7px] text-[14px] tracking-[-0.01em] text-[#424242] rounded-[2px] border ${sel ? "bg-[#ebebeb] border-[#616161]" : "border-transparent"}`}>
                    <Tbl className="w-[17px] h-[17px] shrink-0" />
                    <span className="ml-[5px] whitespace-nowrap">{t}</span>
                    <span className="ml-auto flex items-center gap-[5px]">
                      {f && <Funnel />}
                      <Dots />
                    </span>
                  </div>
                </div>
              ))}
            </div>
          </div>
          {/* Filter */}
          <div className="flex-1 pl-[20px]">
            <div className="h-[40px] flex items-center justify-between pl-[1px]">
              <span className="text-[24px] tracking-[-0.015em] mt-[-2px]">Filter data</span>
              <span className="w-[208px] h-[40px] border border-[#d1d1d1] rounded-[2px] flex items-center justify-center text-[17px] font-medium">Switch to DAX editor</span>
            </div>
            <div className="h-[41px] pb-[3px] border-b border-[#e0e0e0] flex items-center text-[14px] text-[#424242]">
              <Plus className="ml-[6px] w-[32px] h-[32px]" strokeWidth={0.8} />
              <span className="ml-[5px]">New</span>
              <svg viewBox="0 0 18 20" className="ml-[25px] w-[18px] h-[20px]" fill="none" stroke="#424242" strokeWidth="1.1"><rect x="1" y="2" width="14" height="15" rx="3" /><path d="M3 19h11a3 3 0 0 0 3-3V6M4.500 9.500l2.500 2.500 5-5" /></svg>
              <span className="ml-[12px]">Deselect all</span>
              <Trash c="#424242" className="ml-[21px] w-[19px] h-[21px]" />
              <span className="ml-[11px]">Delete</span>
              <span className="ml-[22px]"><GroupIc /></span>
              <span className="ml-[11px] text-[#b8b8b8]">Group</span>
              <span className="ml-[24px]"><GroupIc x /></span>
              <span className="ml-[8px] text-[#b8b8b8]">Ungroup</span>
            </div>
            <div className="mt-[15px] h-[40px] flex items-center text-[16px] tracking-[0.01em] text-[#424242] pl-[5px]">
              <span className="w-[106px] whitespace-nowrap">Show data if</span>
              <SelectBox t="All" w="w-[99px]" />
              <span className="ml-[6px] whitespace-nowrap">of these rules are true</span>
            </div>
            <div className="mt-[7px] w-[683px] h-[38px] border-b border-[#e0e0e0] flex items-center text-[16.5px] font-semibold">
              <span className="ml-[83px] w-[158px]">Column</span>
              <span className="w-[157px]">Condition</span>
              <span>Value</span>
            </div>
            <div className="mt-[5px] ml-[5px] w-[673px] h-[50px] bg-[#f5f5f5] flex items-center">
              <span className="ml-[11px] w-[8px] grid grid-cols-2 gap-x-[2px] gap-y-[2px]">
                {[0, 1, 2, 3, 4, 5].map((i) => <span key={i} className="w-[3px] h-[3px] bg-[#424242]" />)}
              </span>
              <span className="ml-[19px] w-[24px] h-[24px] bg-[#117865] rounded-[2px] flex items-center justify-center shrink-0"><Check className="w-[17px] h-[17px] text-white" strokeWidth={1.8} /></span>
              <span className="ml-[11px]"><SelectBox t="Airline" w="w-[147px]" /></span>
              <span className="ml-[10px]"><SelectBox t="Equals" w="w-[148px]" /></span>
              <div className="ml-[10px] w-[200px] h-[40px] bg-white border border-[#8a8886] rounded-[3px] flex items-center pl-[10px] text-[18px] text-[#424242]">A</div>
              <span className="ml-[15px]"><GroupIc /></span>
              <Trash c="#424242" className="ml-[21px] w-[19px] h-[22px]" />
            </div>
            <div className="mt-[6px] h-[40px] flex items-center pl-[101px] text-[17px] font-medium tracking-[-0.01em]">
              <Plus className="w-[32px] h-[32px]" strokeWidth={0.8} />
              <span className="ml-[2px]">New</span>
            </div>
          </div>
        </div>
        <div className="mt-[14px] flex justify-end gap-[10px] shrink-0 mr-[-2px] text-[17px] font-medium tracking-[-0.01em]">
          <span className="w-[76px] h-[40px] bg-[#f0f0f0] rounded-[4px] flex items-center justify-center text-[#bdbdbd]">Save</span>
          <span className="w-[85px] h-[40px] border border-[#d1d1d1] rounded-[4px] flex items-center justify-center">Close</span>
        </div>
      </div>
    </div>
  );
}
